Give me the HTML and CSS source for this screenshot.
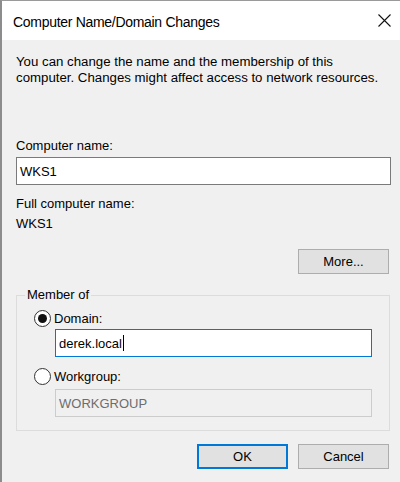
FILE: index.html
```html
<!DOCTYPE html>
<html>
<head>
<meta charset="utf-8">
<link rel="stylesheet" href="styles.css">
</head>
<body>
<div class="window">
  <div class="titlebar">
    <span class="title">Computer Name/Domain Changes</span>
    <svg class="close" width="13" height="13" viewBox="0 0 13 13"><path d="M0.5 0.5 L12.5 12.5 M12.5 0.5 L0.5 12.5" stroke="#111" stroke-width="1.1" fill="none"/></svg>
  </div>
  <div class="content">
    <p class="intro">You can change the name and the membership of this<br>computer. Changes might affect access to network resources.</p>
    <div class="label first">Computer name:</div>
    <div class="field">WKS1</div>
    <div class="label second">Full computer name:</div>
    <div class="value">WKS1</div>
    <div class="more-row"><button class="btn">More...</button></div>
    <fieldset class="group">
      <legend>Member of</legend>
      <div class="radio-row first-row">
        <svg width="17" height="17" viewBox="0 0 17 17"><circle cx="8.5" cy="8.5" r="8" fill="#fff" stroke="#333" stroke-width="1"/><circle cx="8.5" cy="8.5" r="4.5" fill="#111"/></svg>
        <span>Domain:</span>
      </div>
      <div class="field sub focused">derek.local<span class="caret"></span></div>
      <div class="radio-row second-row">
        <svg width="17" height="17" viewBox="0 0 17 17"><circle cx="8.5" cy="8.5" r="8" fill="#fff" stroke="#333" stroke-width="1"/></svg>
        <span>Workgroup:</span>
      </div>
      <div class="field sub disabled">WORKGROUP</div>
    </fieldset>
    <div class="buttons">
      <button class="btn ok">OK</button>
      <button class="btn">Cancel</button>
    </div>
  </div>
</div>
</body>
</html>
```
FILE: styles.css
```css
html, body {
  margin: 0;
  background: #f0f0f0;
}
body {
  font-family: "Liberation Sans", Arial, sans-serif;
  font-size: 13px;
  color: #000;
}
.window {
  border-left: 2px solid #8c8c8c;
  border-top: 1px solid #9a9a9a;
  height: 481px;
  background: #f0f0f0;
}
.titlebar {
  height: 39px;
  background: #fff;
  display: flex;
  align-items: center;
  justify-content: space-between;
  padding: 0 9px 0 11px;
}
.title {
  font-size: 14px;
  letter-spacing: -0.3px;
  margin-top: 2px;
}
.close {
  margin-top: -1px;
}
.content {
  padding: 14px 9px 0 14px;
}
.intro {
  margin: 0;
  line-height: 16px;
  font-size: 13.25px;
}
.label {
  line-height: 16px;
}
.label.first {
  margin-top: 52px;
}
.label.second {
  margin-top: 11px;
}
.field {
  height: 28px;
  box-sizing: border-box;
  border: 1px solid #7a7a7a;
  background: #fff;
  margin-top: 3px;
  padding-left: 3px;
  display: flex;
  align-items: center;
}
.value {
  margin-top: 4px;
  line-height: 16px;
}
.more-row {
  display: flex;
  justify-content: flex-end;
  margin-top: 17px;
  padding-right: 2px;
}
.btn {
  width: 91px;
  height: 25px;
  box-sizing: border-box;
  background: #e1e1e1;
  border: 1px solid #adadad;
  font-family: inherit;
  font-size: 13px;
  color: #000;
  padding: 0;
  margin: 0;
}
.group {
  margin: 13px 1px 0 0;
  padding: 0 0 13px 0;
  border: 1px solid #dcdcdc;
  min-width: 0;
}
.group legend {
  margin-left: 8px;
  padding: 0 2px;
  line-height: 16px;
}
.radio-row {
  display: flex;
  align-items: center;
  gap: 3px;
  margin-left: 17px;
  height: 17px;
}
.radio-row svg {
  display: block;
}
.first-row {
  margin-top: 7px;
}
.second-row {
  margin-top: 11px;
}
.field.sub {
  margin-left: 38px;
  width: 317px;
}
.field.focused {
  margin-top: 2px;
  border-color: #0078d7;
}
.caret {
  display: inline-block;
  width: 1px;
  height: 16px;
  background: #000;
  margin-left: 1px;
}
.field.disabled {
  margin-top: 4px;
  background: #f0f0f0;
  border-color: #cccccc;
  color: #6d6d6d;
}
.buttons {
  display: flex;
  justify-content: flex-end;
  gap: 10px;
  margin-top: 13px;
  padding-right: 2px;
}
.btn.ok {
  border: 2px solid #0078d7;
}
```
